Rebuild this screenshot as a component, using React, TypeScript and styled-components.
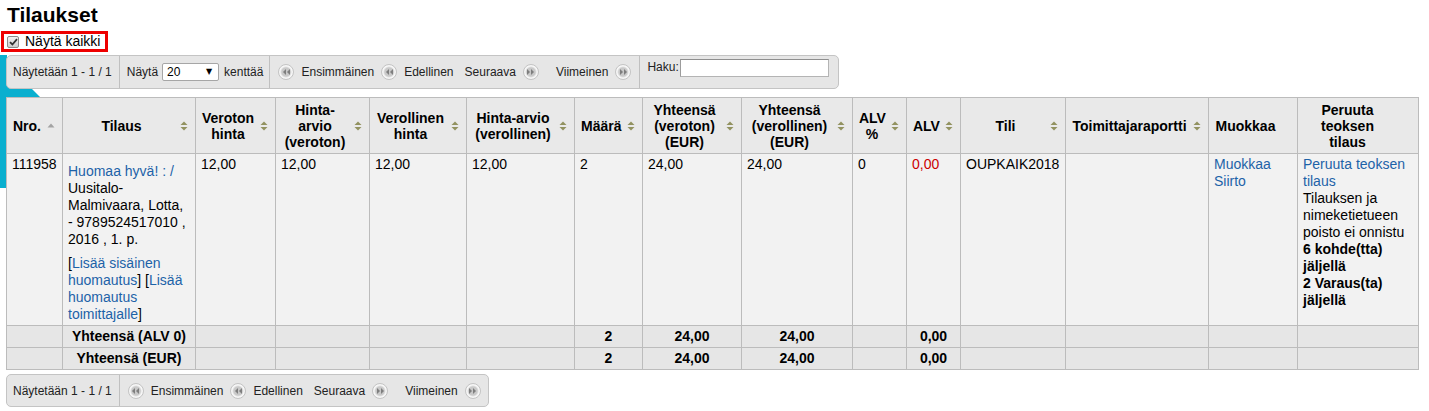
import React from "react";
import styled, { createGlobalStyle } from "styled-components";

const GlobalStyle = createGlobalStyle`
  html, body { margin: 0; padding: 0; background: #fff; }
  body { font-family: "Liberation Sans", Arial, sans-serif; color: #000; }
`;

const Page = styled.div`
  position: relative;
  z-index: 0;
  padding: 3px 6px 20px 6px;
`;

const Decoration = styled.svg`
  position: absolute;
  left: 0;
  top: 0;
  z-index: -1;
`;

const Title = styled.h1`
  margin: 0 0 0 1px;
  font-size: 21px;
  line-height: 24px;
  font-weight: bold;
`;

const ShowAllRow = styled.div`
  margin-top: 4px;
  height: 22px;
`;

const ShowAll = styled.label`
  display: inline-flex;
  align-items: center;
  gap: 6px;
  box-sizing: border-box;
  height: 21px;
  margin-left: -5px;
  padding: 0 5px 0 3px;
  border: 3px solid #ee0000;
  font-size: 14px;
  line-height: 15px;
  cursor: pointer;
`;

const CheckBox = styled.span`
  box-sizing: border-box;
  width: 12px;
  height: 12px;
  border: 1px solid #8a8a8a;
  border-radius: 2px;
  background: linear-gradient(#f2f2f2, #cdcdcd);
  display: flex;
  align-items: center;
  justify-content: center;
`;

const ToolbarRow = styled.div<{ $mt: number }>`
  display: flex;
  align-items: flex-start;
  margin-top: ${(p) => p.$mt}px;
`;

const Toolbar = styled.div<{ $h: number }>`
  display: flex;
  align-items: stretch;
  box-sizing: border-box;
  height: ${(p) => p.$h}px;
  border: 1px solid #c4c4c4;
  border-radius: 5px;
  background: #e6e6e6;
  font-size: 12px;
  line-height: 14px;
  color: #222;
  white-space: nowrap;
`;

const Section = styled.div<{ $pl: number; $pr: number; $last?: boolean; $top?: boolean }>`
  display: flex;
  align-items: ${(p) => (p.$top ? "flex-start" : "center")};
  padding: ${(p) => (p.$top ? "3px" : "0")} ${(p) => p.$pr}px 0 ${(p) => p.$pl}px;
  border-right: ${(p) => (p.$last ? "none" : "1px solid #c0c0c0")};
`;

const SelectWrap = styled.span`
  display: inline-flex;
  align-items: center;
  box-sizing: border-box;
  width: 57px;
  height: 18px;
  margin: 0 5px 0 4px;
  padding: 0 6px 0 4px;
  background: #fff;
  border: 1px solid #a6a6a6;
  border-radius: 2px;
`;

const PageSelect = styled.select`
  appearance: none;
  -webkit-appearance: none;
  flex: 1;
  min-width: 0;
  border: none;
  background: transparent;
  padding: 0;
  margin: 0;
  font: inherit;
  color: #000;
  outline: none;
`;

const SelectArrow = styled.span`
  font-family: "DejaVu Sans", sans-serif;
  font-size: 8px;
  color: #000;
`;

const NavButton = styled.a<{ $ml: number }>`
  display: inline-flex;
  align-items: center;
  gap: 7px;
  margin-left: ${(p) => p.$ml}px;
  color: #222;
  text-decoration: none;
  cursor: pointer;
`;

const NavCircle = styled.span`
  box-sizing: border-box;
  width: 16px;
  height: 16px;
  border-radius: 50%;
  border: 1px solid #c4c4c4;
  background: radial-gradient(circle at 50% 50%, #c9c9c9 0 42%, #f8f8f8 60%, #e9e9e9 100%);
  display: flex;
  align-items: center;
  justify-content: center;
`;

const SearchLabel = styled.label`
  display: flex;
  align-items: flex-start;
  padding-top: 1px;
`;

const SearchInput = styled.input`
  box-sizing: border-box;
  width: 149px;
  height: 18px;
  margin: -1px 0 0 1px;
  padding: 1px 3px;
  border: 1px solid #b4b4b4;
  border-top-color: #8f8f8f;
  border-left-color: #9c9c9c;
  background: #fff;
  font: inherit;
  outline: none;
`;

const OrdersTable = styled.table`
  border-collapse: collapse;
  table-layout: fixed;
  width: 1412px;
  margin-top: 8px;
  font-size: 14px;
  line-height: 17px;
  border: 1px solid #bcbcbc;
`;

const Col = styled.col<{ $w: number }>`
  width: ${(p) => p.$w}px;
`;

const HeadCell = styled.th`
  background: #e9e9e9;
  border: 1px solid #bcbcbc;
  padding: 4px 7px 3px 6px;
  vertical-align: middle;
  font-weight: bold;
  line-height: 16px;
  color: #000;
`;

const HeadInner = styled.div`
  display: flex;
  align-items: center;
  gap: 6px;
`;

const HeadLabel = styled.span<{ $pr: number }>`
  flex: 1;
  min-width: 0;
  text-align: center;
  padding-right: ${(p) => p.$pr}px;
`;

const SortSvg = styled.svg<{ $hidden: boolean }>`
  flex: none;
  visibility: ${(p) => (p.$hidden ? "hidden" : "visible")};
`;

const Cell = styled.td<{ $red?: boolean }>`
  border: 1px solid #bcbcbc;
  background: #f2f2f2;
  padding: 2px 5px;
  vertical-align: top;
  color: ${(p) => (p.$red ? "#cc0000" : "#000")};
`;

const FootCell = styled.th`
  border: 1px solid #bcbcbc;
  background: #e6e6e6;
  padding: 2px 5px;
  text-align: center;
  font-weight: bold;
  color: #000;
`;

const Para = styled.p`
  margin: 7px 0 0;
`;

const Link = styled.a`
  color: #1d62a8;
  text-decoration: none;
`;

type SortMode = "both" | "asc" | "none";

const SortIcon = ({ mode }: { mode: SortMode }) => (
  <SortSvg $hidden={mode === "none"} width="8" height="10" viewBox="0 0 8 10">
    {mode === "asc" ? (
      <polygon points="0.5,6.5 4,2.5 7.5,6.5" fill="#a3a3a3" />
    ) : (
      <>
        <polygon points="0.5,4 4,0.5 7.5,4" fill="#929260" />
        <polygon points="0.5,6 7.5,6 4,9.5" fill="#929260" />
      </>
    )}
  </SortSvg>
);

const NavIcon = ({ dir }: { dir: "left" | "right" }) => (
  <NavCircle>
    <svg width="7" height="6" viewBox="0 0 7 6">
      {dir === "left" ? (
        <>
          <polygon points="3,0 3,6 0,3" fill="#7e7e7e" />
          <polygon points="7,0 7,6 4,3" fill="#7e7e7e" />
        </>
      ) : (
        <>
          <polygon points="0,0 0,6 3,3" fill="#7e7e7e" />
          <polygon points="4,0 4,6 7,3" fill="#7e7e7e" />
        </>
      )}
    </svg>
  </NavCircle>
);

const navButtons: { label: string; dir: "left" | "right"; ml: number }[] = [
  { label: "Ensimmäinen", dir: "left", ml: 0 },
  { label: "Edellinen", dir: "left", ml: 7 },
  { label: "Seuraava", dir: "right", ml: 11 },
  { label: "Viimeinen", dir: "right", ml: 17 },
];

const Pager = ({ full }: { full?: boolean }) => (
  <Toolbar $h={full ? 34 : 33}>
    <Section $pl={6} $pr={7}>Näytetään 1 - 1 / 1</Section>
    {full && (
      <Section $pl={7} $pr={6}>
        Näytä
        <SelectWrap>
          <PageSelect defaultValue="20">
            <option value="10">10</option>
            <option value="20">20</option>
            <option value="50">50</option>
            <option value="100">100</option>
          </PageSelect>
          <SelectArrow>▼</SelectArrow>
        </SelectWrap>
        kenttää
      </Section>
    )}
    <Section $pl={8} $pr={full ? 8 : 7} $last={!full}>
      {navButtons.map((b) => (
        <NavButton key={b.label} $ml={b.ml}>
          {b.dir === "left" && <NavIcon dir="left" />}
          {b.label}
          {b.dir === "right" && <NavIcon dir="right" />}
        </NavButton>
      ))}
    </Section>
    {full && (
      <Section $pl={7} $pr={9} $last $top>
        <SearchLabel>
          Haku:
          <SearchInput type="text" />
        </SearchLabel>
      </Section>
    )}
  </Toolbar>
);

const columns: { label: string; width: number; sort: SortMode; pr?: number }[] = [
  { label: "Nro.", width: 56, sort: "asc" },
  { label: "Tilaus", width: 133, sort: "both" },
  { label: "Veroton hinta", width: 80, sort: "both" },
  { label: "Hinta-arvio (veroton)", width: 94, sort: "both" },
  { label: "Verollinen hinta", width: 97, sort: "both" },
  { label: "Hinta-arvio (verollinen)", width: 108, sort: "both" },
  { label: "Määrä", width: 68, sort: "both" },
  { label: "Yhteensä (veroton) (EUR)", width: 99, sort: "both" },
  { label: "Yhteensä (verollinen) (EUR)", width: 111, sort: "both" },
  { label: "ALV %", width: 54, sort: "both" },
  { label: "ALV", width: 54, sort: "both" },
  { label: "Tili", width: 105, sort: "both" },
  { label: "Toimittajaraportti", width: 143, sort: "both" },
  { label: "Muokkaa", width: 89, sort: "none" },
  { label: "Peruuta teoksen tilaus", width: 121, sort: "none", pr: 6 },
];

const totals: string[][] = [
  ["", "Yhteensä (ALV 0)", "", "", "", "", "2", "24,00", "24,00", "", "0,00", "", "", "", ""],
  ["", "Yhteensä (EUR)", "", "", "", "", "2", "24,00", "24,00", "", "0,00", "", "", "", ""],
];

export default function App() {
  return (
    <>
      <GlobalStyle />
      <Page>
        <Decoration width="50" height="190" viewBox="0 0 50 190" aria-hidden="true">
          <polygon points="0,55 7,55 7,64 50,107 50,188 0,188" fill="#0aafcf" />
        </Decoration>
        <Title>Tilaukset</Title>
        <ShowAllRow>
          <ShowAll>
            <CheckBox>
              <svg width="9" height="8" viewBox="0 0 9 8">
                <path d="M1 4.2 L3.4 6.5 L8 1.2" fill="none" stroke="#333" strokeWidth="1.8" />
              </svg>
            </CheckBox>
            Näytä kaikki
          </ShowAll>
        </ShowAllRow>
        <ToolbarRow $mt={2}>
          <Pager full />
        </ToolbarRow>
        <OrdersTable>
          <colgroup>
            {columns.map((c) => (
              <Col key={c.label} $w={c.width} />
            ))}
          </colgroup>
          <thead>
            <tr>
              {columns.map((c) => (
                <HeadCell key={c.label}>
                  <HeadInner>
                    <HeadLabel $pr={c.pr ?? 0}>{c.label}</HeadLabel>
                    <SortIcon mode={c.sort} />
                  </HeadInner>
                </HeadCell>
              ))}
            </tr>
          </thead>
          <tbody>
            <tr>
              <Cell>111958</Cell>
              <Cell>
                <Para>
                  <Link href="#">Huomaa hyvä! : /</Link> Uusitalo-Malmivaara, Lotta, - 9789524517010 , 2016 , 1. p.
                </Para>
                <Para>
                  [<Link href="#">Lisää sisäinen huomautus</Link>] [<Link href="#">Lisää huomautus toimittajalle</Link>]
                </Para>
              </Cell>
              <Cell>12,00</Cell>
              <Cell>12,00</Cell>
              <Cell>12,00</Cell>
              <Cell>12,00</Cell>
              <Cell>2</Cell>
              <Cell>24,00</Cell>
              <Cell>24,00</Cell>
              <Cell>0</Cell>
              <Cell $red>0,00</Cell>
              <Cell>OUPKAIK2018</Cell>
              <Cell></Cell>
              <Cell>
                <Link href="#">Muokkaa</Link>
                <br />
                <Link href="#">Siirto</Link>
              </Cell>
              <Cell>
                <Link href="#">Peruuta teoksen tilaus</Link>
                <br />
                Tilauksen ja nimeketietueen poisto ei onnistu
                <br />
                <b>6 kohde(tta) jäljellä</b>
                <br />
                <b>2 Varaus(ta) jäljellä</b>
              </Cell>
            </tr>
          </tbody>
          <tfoot>
            {totals.map((row, i) => (
              <tr key={i}>
                {row.map((v, j) => (
                  <FootCell key={j}>{v}</FootCell>
                ))}
              </tr>
            ))}
          </tfoot>
        </OrdersTable>
        <ToolbarRow $mt={4}>
          <Pager />
        </ToolbarRow>
      </Page>
    </>
  );
}
